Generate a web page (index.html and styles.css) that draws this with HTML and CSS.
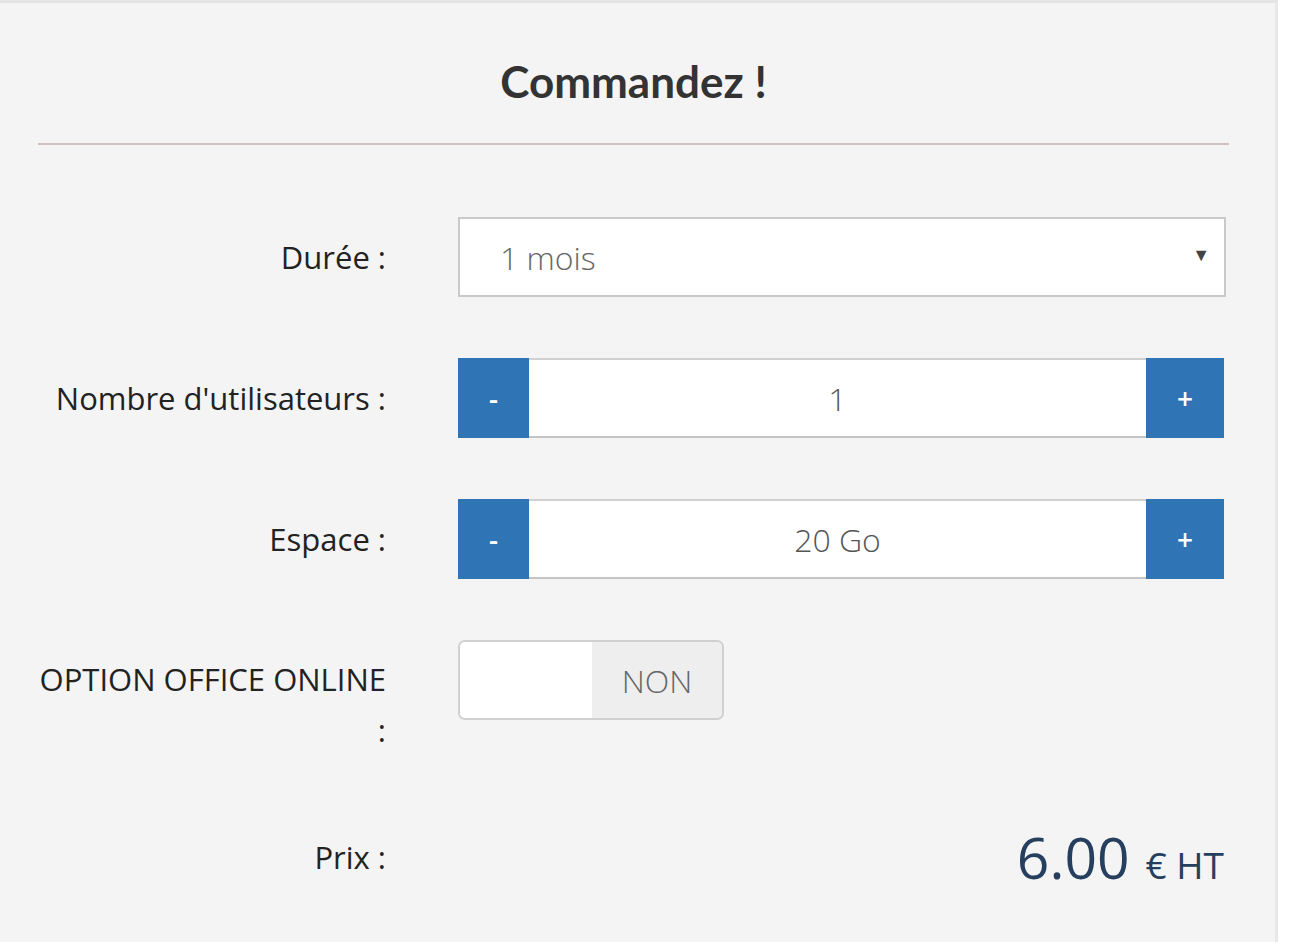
FILE: index.html
```html
<!DOCTYPE html>
<html lang="fr">
<head>
    <meta charset="UTF-8">
    <title>Commandez !</title>
    <link rel="stylesheet" href="styles.css">
</head>
<body>
    <div class="panel">
        <h2 class="panel-title">Commandez !</h2>
        <hr class="sep">

        <form class="order-form">
            <div class="row">
                <label class="lbl">Durée :</label>
                <div class="ctrl">
                    <div class="select-box">
                        <span>1 mois</span>
                        <span class="caret">&#9660;</span>
                    </div>
                </div>
            </div>

            <div class="row">
                <label class="lbl">Nombre d'utilisateurs :</label>
                <div class="ctrl">
                    <div class="spinner">
                        <button type="button" class="spin-btn">-</button>
                        <div class="spin-val">1</div>
                        <button type="button" class="spin-btn">+</button>
                    </div>
                </div>
            </div>

            <div class="row">
                <label class="lbl">Espace :</label>
                <div class="ctrl">
                    <div class="spinner">
                        <button type="button" class="spin-btn">-</button>
                        <div class="spin-val">20 Go</div>
                        <button type="button" class="spin-btn">+</button>
                    </div>
                </div>
            </div>

            <div class="row">
                <label class="lbl lbl-wrap">OPTION OFFICE ONLINE :</label>
                <div class="ctrl">
                    <div class="toggle">
                        <span class="toggle-knob"></span>
                        <span class="toggle-off">NON</span>
                    </div>
                </div>
            </div>

            <div class="row">
                <label class="lbl">Prix :</label>
                <div class="ctrl price">
                    <span class="amount">6.00</span><span class="unit">€ HT</span>
                </div>
            </div>
        </form>
    </div>
</body>
</html>
```

FILE: styles.css
```css
body {
    margin: 0;
    background-color: #fff;
    font-family: "Open Sans", Arial, sans-serif;
    color: #333;
}
.panel {
    width: 1278px;
    height: 942px;
    background-color: #f4f4f4;
    border-top: 3px solid #e4e4e4;
    border-right: 3px solid #e8e8e8;
    box-sizing: border-box;
    padding: 0 46px 0 38px;
}
.panel-title {
    font-family: Lato, "Open Sans", sans-serif;
    font-weight: bold;
    font-size: 44px;
    color: #333;
    text-align: center;
    margin: 0;
    padding-top: 54px;
    line-height: 48px;
}
.sep {
    border: none;
    border-top: 2px solid #cfbfbf;
    margin: 38px 0 0;
}
.order-form {
    padding-top: 72px;
}
.row {
    display: grid;
    grid-template-columns: 348px 768px;
    column-gap: 72px;
    margin-bottom: 61px;
}
.lbl {
    text-align: right;
    font-size: 31px;
    color: #222;
    line-height: 80px;
}
.lbl-wrap {
    line-height: 51px;
    padding-top: 14px;
}
.select-box {
    height: 80px;
    box-sizing: border-box;
    border: 2px solid #c9c9c9;
    background-color: #fff;
    display: flex;
    align-items: center;
    justify-content: space-between;
    padding: 0 14px 0 40px;
    font-size: 32px;
    font-weight: 300;
    color: #666;
}
.caret {
    font-size: 18px;
    color: #444;
    margin-top: -6px;
}
.spinner {
    display: flex;
    height: 80px;
    width: 766px;
}
.spin-btn {
    width: 71px;
    border: none;
    background-color: #2f74b5;
    color: #fff;
    font-family: "Open Sans", Arial, sans-serif;
    font-size: 28px;
    font-weight: 600;
    padding: 0;
}
.spin-btn:last-child {
    width: 78px;
}
.spin-val {
    flex: 1;
    background-color: #fff;
    border-top: 2px solid #d0d0d0;
    border-bottom: 2px solid #c4c4c4;
    display: flex;
    align-items: center;
    justify-content: center;
    font-size: 32px;
    font-weight: 300;
    color: #555;
}
.toggle {
    display: flex;
    width: 266px;
    height: 80px;
    box-sizing: border-box;
    border: 2px solid #d0d0d0;
    border-radius: 7px;
    overflow: hidden;
}
.toggle-knob {
    width: 132px;
    background-color: #fff;
}
.toggle-off {
    flex: 1;
    background-color: #eee;
    display: flex;
    align-items: center;
    justify-content: center;
    font-size: 32px;
    font-weight: 300;
    color: #666;
}
.price {
    text-align: right;
    color: #263f5e;
    line-height: 80px;
    padding-right: 2px;
}
.amount {
    font-size: 57px;
}
.unit {
    font-size: 37px;
    margin-left: 16px;
}
```
